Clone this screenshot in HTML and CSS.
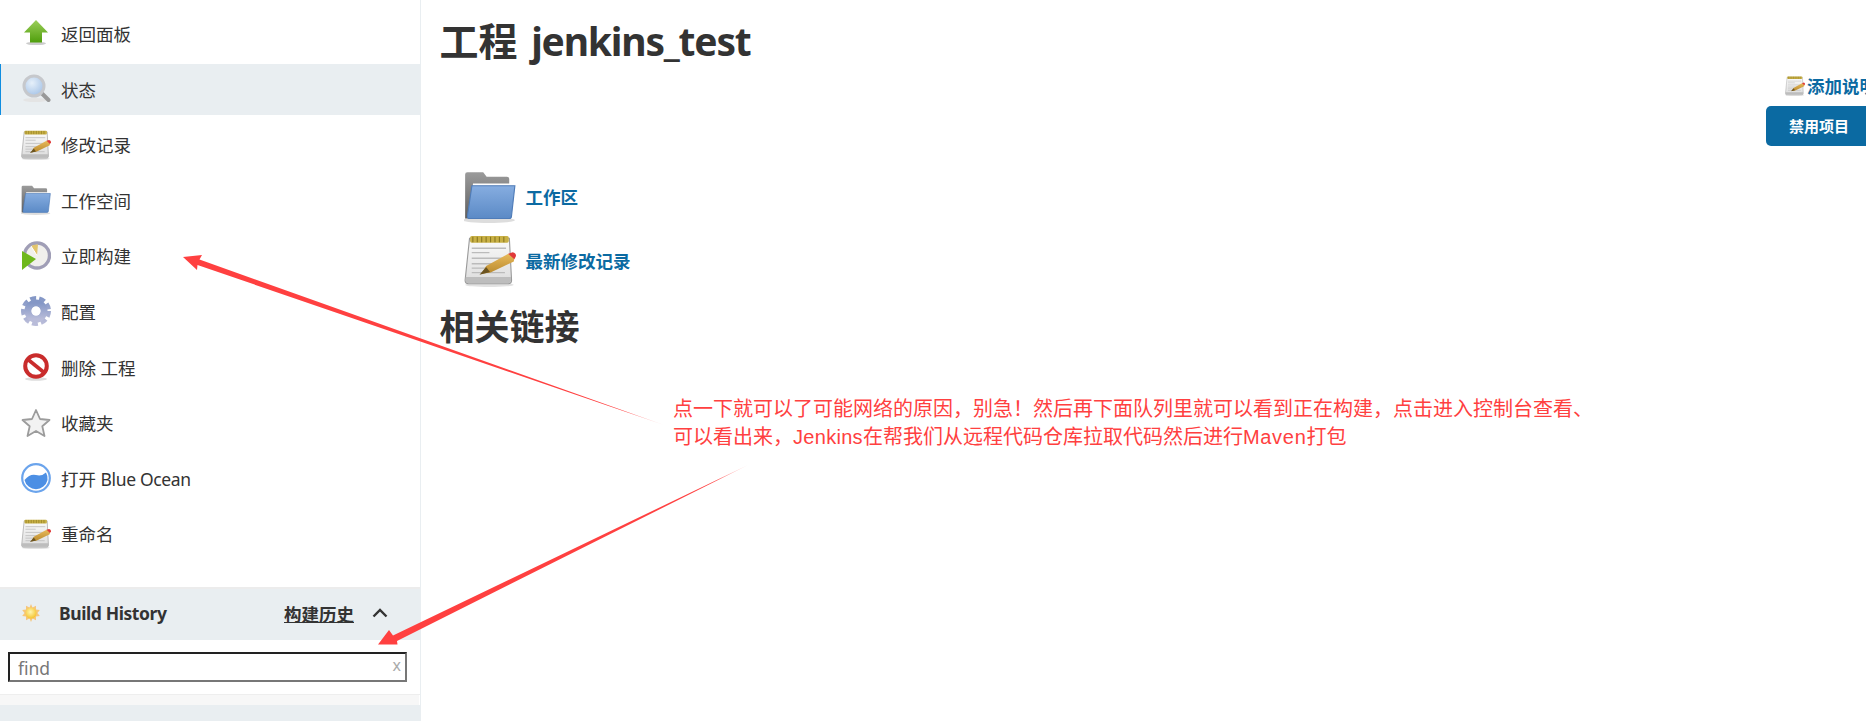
FILE: index.html
```html
<!DOCTYPE html>
<html lang="zh">
<head>
<meta charset="utf-8">
<title>工程 jenkins_test</title>
<link rel="stylesheet" href="styles.css">
</head>
<body>
<svg class="defs" width="0" height="0" aria-hidden="true">
  <defs>
    <linearGradient id="gGreen" x1="0" y1="0" x2="0" y2="1"><stop offset="0" stop-color="#9ccf5a"/><stop offset="1" stop-color="#4f9e0c"/></linearGradient>
    <linearGradient id="gPaper" x1="0" y1="0" x2="0" y2="1"><stop offset="0" stop-color="#fafafa"/><stop offset="1" stop-color="#dcdcdc"/></linearGradient>
    <linearGradient id="gFolder" x1="0" y1="0" x2="0" y2="1"><stop offset="0" stop-color="#86ade0"/><stop offset="1" stop-color="#5b8ac6"/></linearGradient>
    <linearGradient id="gBack" x1="0" y1="0" x2="0" y2="1"><stop offset="0" stop-color="#9b9b9b"/><stop offset="1" stop-color="#5f5f5f"/></linearGradient>
    <linearGradient id="gGear" x1="0" y1="0" x2="0" y2="1"><stop offset="0" stop-color="#8497c6"/><stop offset="1" stop-color="#b9bcd9"/></linearGradient>
    <linearGradient id="gPencil" x1="0" y1="0" x2="0" y2="1"><stop offset="0" stop-color="#e8b95a"/><stop offset="1" stop-color="#b98a2e"/></linearGradient>
    <radialGradient id="gLens" cx=".4" cy=".35" r=".7"><stop offset="0" stop-color="#e6f0fa"/><stop offset="1" stop-color="#a4c2e6"/></radialGradient>
    <radialGradient id="gSun" cx=".45" cy=".4" r=".6"><stop offset="0" stop-color="#fff6b0"/><stop offset="1" stop-color="#f5c431"/></radialGradient>
    <linearGradient id="gTail1" gradientUnits="userSpaceOnUse" x1="400" y1="330" x2="664" y2="425"><stop offset="0" stop-color="#ff4040"/><stop offset=".85" stop-color="#ff4040"/><stop offset="1" stop-color="#ff4040" stop-opacity=".25"/></linearGradient>
    <linearGradient id="gTail2" gradientUnits="userSpaceOnUse" x1="600" y1="535" x2="748" y2="465"><stop offset="0" stop-color="#ff4040"/><stop offset=".8" stop-color="#ff4040"/><stop offset="1" stop-color="#ff4040" stop-opacity=".2"/></linearGradient>
    <symbol id="i-up" viewBox="0 0 30 30">
      <ellipse cx="15" cy="24.500" rx="10" ry="1.600" fill="#ccc"/>
      <path d="M15 1 27 13.500H21V23.500H9V13.500H3Z" fill="url(#gGreen)"/>
    </symbol>
    <symbol id="i-search" viewBox="0 0 30 30">
      <ellipse cx="14" cy="26" rx="12" ry="2" fill="#e4e4e4"/>
      <path d="M20 18.500 27.500 26" stroke="#999" stroke-width="4" stroke-linecap="round"/>
      <circle cx="13" cy="12" r="10" fill="url(#gLens)" stroke="#c6c8cc" stroke-width="3"/>
    </symbol>
    <symbol id="i-note" viewBox="1 0 47 47">
      <ellipse cx="24" cy="45" rx="22" ry="2" fill="#e2e2e2"/>
      <path d="M6 3H42L44 41Q44 44 41 44H5Q2 44 2 41Z" fill="url(#gPaper)" stroke="#9a9a9a" stroke-width="1"/>
      <path d="M2.500 38H43.500V41Q43.500 43.500 41 43.500H5Q2.500 43.500 2.500 41Z" fill="#bdbdbd"/>
      <rect x="6.500" y="1" width="35" height="6" rx="1.500" fill="#c8b045"/>
      <path d="M9 1.500V6.500M13 1.500V6.500M17 1.500V6.500M21 1.500V6.500M25 1.500V6.500M29 1.500V6.500M33 1.500V6.500M37 1.500V6.500" stroke="#8a7820" stroke-width="1"/>
      <path d="M8 12H39M8 16H24M8 21H36M8 26H30M8 30H20M8 34H38" stroke="#bbb" stroke-width="1.200"/>
      <path d="M17 35 21 28 41 17 47 18 46 24 25 34Z" fill="url(#gPencil)"/>
      <path d="M41 17 45 15.500Q48 16 48 19L46.500 22Z" fill="#e0393a"/>
      <path d="M15 36 21 29 24.500 33.500Z" fill="#6b5420"/>
    </symbol>
    <symbol id="i-folder" viewBox="2 1 46 46">
      <ellipse cx="24" cy="44.500" rx="23" ry="2.500" fill="#ddd"/>
      <path d="M3 4Q3 2 5 2H19L22 6H40Q42 6 42 8V12H10L6 43H3Z" fill="url(#gBack)"/>
      <path d="M9 14H47L44 41Q44 43 42 43H6Q5 43 5 41Z" fill="url(#gFolder)" stroke="#4f7cb8" stroke-width="1"/>
    </symbol>
    <symbol id="i-clock" viewBox="0 0 30 30">
      <circle cx="16" cy="14.500" r="12.500" fill="#f1f0ec" stroke="#a09eb6" stroke-width="3.400"/>
      <path d="M16 14.500 10 5Q13 3 17 3.500Z" fill="#e2c46c"/>
      <path d="M16 14.500 10 5" stroke="#fff" stroke-width="1"/>
      <path d="M1 10 15 18 1 29Z" fill="#6fb81c"/>
    </symbol>
    <symbol id="i-gear" viewBox="0 0 30 30">
      <circle cx="15" cy="15" r="12.500" fill="none" stroke="url(#gGear)" stroke-width="5" stroke-dasharray="5.800 3.010"/>
      <circle cx="15" cy="15" r="8" fill="none" stroke="url(#gGear)" stroke-width="7"/>
      <circle cx="15" cy="15" r="4.500" fill="#fff"/>
    </symbol>
    <symbol id="i-stop" viewBox="0 0 30 30">
      <ellipse cx="15" cy="27" rx="11" ry="1.800" fill="#ddd"/>
      <circle cx="15" cy="14" r="10.800" fill="#fff" stroke="#c92c2c" stroke-width="4"/>
      <path d="M7 7.500 23 20.500" stroke="#c92c2c" stroke-width="3.600"/>
    </symbol>
    <symbol id="i-star" viewBox="0 0 30 30">
      <path d="M15 2 19 11 28.500 12 21.300 18.300 23.500 28 15 23 6.500 28 8.700 18.300 1.500 12 11 11Z" fill="#f2f2f2" stroke="#9c9c9c" stroke-width="1.800" stroke-linejoin="round"/>
    </symbol>
    <symbol id="i-ocean" viewBox="0 0 30 30">
      <circle cx="15" cy="15" r="13.800" fill="#fff" stroke="#6ba4ec" stroke-width="2.200"/>
      <path d="M3.500 17Q9 10.500 15 12T25 9.500Q27 13 26.500 17A11.800 11.800 0 0 1 3.500 17Z" fill="#4c8fe4"/>
    </symbol>
    <symbol id="i-sun" viewBox="0 0 18 18">
      <path d="M9 0 10.500 3.500 14 1.800 14 5.500 17.800 6 15.500 9 17.800 12 14 12.500 14 16.200 10.500 14.500 9 18 7.500 14.500 4 16.200 4 12.500.2 12 2.500 9 .2 6 4 5.500 4 1.800 7.500 3.500Z" fill="#f6c67a"/>
      <circle cx="9" cy="9" r="5.500" fill="url(#gSun)"/>
    </symbol>
  </defs>
</svg>

<div class="page">
  <aside class="side">
    <nav class="tasks">
      <a class="task"><svg class="task-icon"><use href="#i-up"/></svg><span>返回面板</span></a>
      <a class="task active"><svg class="task-icon"><use href="#i-search"/></svg><span>状态</span></a>
      <a class="task"><svg class="task-icon"><use href="#i-note"/></svg><span>修改记录</span></a>
      <a class="task"><svg class="task-icon"><use href="#i-folder"/></svg><span>工作空间</span></a>
      <a class="task"><svg class="task-icon"><use href="#i-clock"/></svg><span>立即构建</span></a>
      <a class="task"><svg class="task-icon"><use href="#i-gear"/></svg><span>配置</span></a>
      <a class="task"><svg class="task-icon"><use href="#i-stop"/></svg><span>删除 工程</span></a>
      <a class="task"><svg class="task-icon"><use href="#i-star"/></svg><span>收藏夹</span></a>
      <a class="task"><svg class="task-icon"><use href="#i-ocean"/></svg><span>打开 <span class="tight-sm">Blue Ocean</span></span></a>
      <a class="task"><svg class="task-icon"><use href="#i-note"/></svg><span>重命名</span></a>
    </nav>
    <section class="history">
      <header class="history-head">
        <svg class="sun"><use href="#i-sun"/></svg>
        <b class="history-title">Build History</b>
        <a class="history-link">构建历史</a>
        <svg class="chevron" viewBox="0 0 16 10"><path d="M1.500 8.500 8 2 14.500 8.500" fill="none" stroke="#333" stroke-width="2.400"/></svg>
      </header>
      <div class="search">
        <div class="search-box"><input class="search-input" placeholder="find"><span class="search-x">x</span></div>
      </div>
      <div class="history-gap"></div>
      <div class="history-foot"></div>
    </section>
  </aside>

  <main class="main">
    <h1 class="title">工程 <span class="title-latin">jenkins_test</span></h1>
    <div class="actions">
      <a class="add-desc"><svg class="add-icon"><use href="#i-note"/></svg>添加说明</a>
      <a class="disable">禁用项目</a>
    </div>
    <ul class="links">
      <li class="link"><svg class="link-icon"><use href="#i-folder"/></svg><a>工作区</a></li>
      <li class="link"><svg class="link-icon"><use href="#i-note"/></svg><a>最新修改记录</a></li>
    </ul>
    <h2 class="subtitle">相关链接</h2>
  </main>
</div>

<svg class="marks" viewBox="0 0 1866 721" aria-hidden="true">
  <path d="M183 257 202 255 199.500 259.500 664 425 197.500 265 197 270Z" fill="url(#gTail1)"/>
  <path d="M378 644.500 389 630 393 635.500 748 465 397 641 397.500 644.500Z" fill="url(#gTail2)"/>
</svg>
<p class="note">点一下就可以了可能网络的原因，别急！然后再下面队列里就可以看到正在构建，点击进入控制台查看、<br>可以看出来，<span class="note-jenkins">Jenkins</span>在帮我们从远程代码仓库拉取代码然后进行<span class="note-maven">Maven</span>打包</p>
</body>
</html>
```

FILE: styles.css
```css
* { box-sizing: border-box; }
html, body { margin: 0; height: 100%; overflow: hidden; background: #fff; }
body {
  position: relative;
  font-family: "Noto Sans", "Noto Sans CJK SC", sans-serif;
  font-size: 17.5px;
  color: #333;
}
a { color: inherit; text-decoration: none; }
.defs { position: absolute; }

.page { display: flex; height: 721px; }

.side {
  flex: 0 0 421px;
  border-right: 1px solid #e9eef1;
  display: flex;
  flex-direction: column;
}
.tasks { display: flex; flex-direction: column; gap: 4.6px; padding-top: 8px; }
.task {
  display: flex;
  align-items: center;
  gap: 10px;
  height: 51px;
  padding-left: 21px;
}
.task.active { background: #e9eef1; box-shadow: inset 1px 0 0 #0f8de0; }
.task-icon { width: 30px; height: 30px; flex: none; }
.tight-sm { letter-spacing: -.35px; }

.history { margin-top: 28px; border-top: 2px solid #ececec; display: flex; flex-direction: column; flex: 1; }
.history-head {
  display: flex;
  align-items: center;
  height: 51px;
  background: #e9eef1;
  padding: 0 0 3px 22px;
}
.sun { width: 18px; height: 18px; flex: none; }
.history-title { margin-left: 19px; font-weight: 700; letter-spacing: -.4px; }
.history-link { margin-left: auto; font-weight: 700; text-decoration: underline; }
.chevron { width: 16px; height: 10px; margin: 0 32px 0 18px; flex: none; }

.search { height: 55px; padding: 12px 13px 0 8px; border-bottom: 1px solid #eee; }
.search-box { position: relative; height: 30px; }
.search-input {
  width: 100%;
  height: 100%;
  border: 2px solid;
  border-color: #222 #777 #777 #222;
  padding: 2px 24px 0 8px;
  background: #fff;
  font: inherit;
  color: #333;
  outline: none;
}
.search-input::placeholder { color: #777; opacity: 1; }
.search-x { position: absolute; right: 6px; top: 2px; color: #aaa; font-size: 16px; }
.history-gap { height: 10px; background: #f7f7f7; margin-right: 1px; }
.history-foot { flex: 1; background: #e9eef1; }

.main { flex: 1; min-width: 0; overflow: hidden; padding-left: 18.500px; }
.title { margin: 14px 0 0; font-size: 39px; line-height: 54px; font-weight: 700; }
.title-latin { letter-spacing: -1.2px; margin-left: 3.500px; }
.actions { display: flex; flex-direction: column; align-items: flex-end; margin-top: 7.500px; }
.add-desc {
  display: flex;
  align-items: center;
  gap: 2px;
  margin-right: -11px;
  height: 20px;
  color: #0b6aa2;
  font-weight: 700;
}
.add-icon { width: 20px; height: 20px; flex: none; }
.disable {
  margin: 10px -6px 0 0;
  width: 106px;
  height: 40px;
  display: flex;
  align-items: center;
  justify-content: center;
  background: #0b6aa2;
  color: #fff;
  border-radius: 5px;
  font-size: 15px;
  font-weight: 700;
}
.links { list-style: none; margin: 25px 0 0; padding: 0 0 0 24px; display: flex; flex-direction: column; gap: 12px; }
.link { display: flex; align-items: center; gap: 10px; height: 52px; color: #0b6aa2; font-weight: 700; }
.link-icon { width: 52px; height: 52px; flex: none; }
.subtitle { margin: 16px 0 0; font-size: 35px; line-height: 48px; font-weight: 700; }

.marks { position: absolute; left: 0; top: 0; width: 1866px; height: 721px; pointer-events: none; }
.note {
  position: absolute;
  left: 673px;
  top: 395px;
  margin: 0;
  white-space: nowrap;
  font-family: "Liberation Sans", "Noto Sans CJK SC", sans-serif;
  font-size: 20px;
  line-height: 28px;
  color: #ff4040;
}
.note-jenkins { letter-spacing: .3px; }
.note-maven { letter-spacing: .7px; }
```
